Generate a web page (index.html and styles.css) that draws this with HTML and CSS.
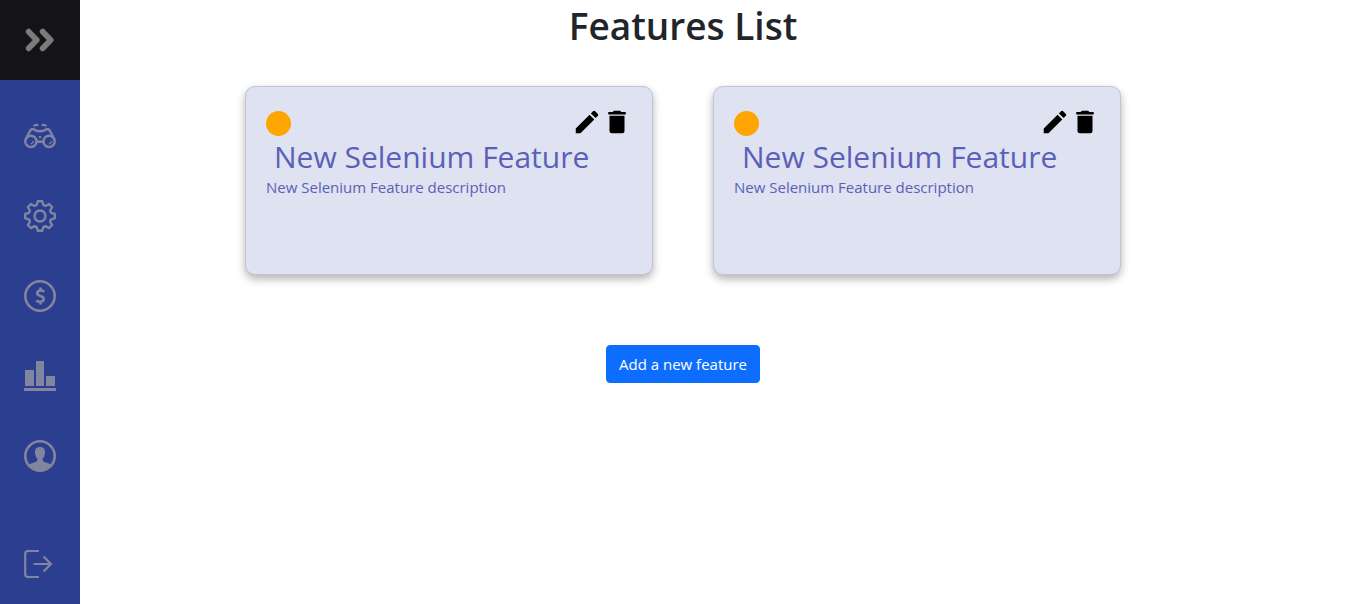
FILE: index.html
```html
<!DOCTYPE html>
<html lang="en">
<head>
  <meta charset="utf-8">
  <meta name="viewport" content="width=device-width, initial-scale=1">
  <title>Features List</title>
  <link rel="stylesheet" href="styles.css">
</head>
<body>
  <div class="layout">
    <nav class="sidebar" aria-label="Main">
      <button class="sidebar-toggle" type="button" aria-label="Expand menu">
        <svg class="nav-icon" viewBox="0 0 32 32"><path d="M4.700 7.700l8 8.300-8 8.300M18.700 7.700l8 8.300-8 8.300" fill="none" stroke="currentColor" stroke-width="5.8" stroke-linecap="round" stroke-linejoin="round"/></svg>
      </button>
      <a class="nav-link" href="#" aria-label="Explore">
        <svg class="nav-icon" viewBox="0 0 32 32" fill="none" stroke="currentColor" stroke-width="2.4">
          <circle cx="6.900" cy="21.400" r="5.600"/><circle cx="25.100" cy="21.400" r="5.600"/>
          <path d="M1.600 19.500L6 11Q7.600 8 10.200 9.600Q12 11.300 16 11.300Q20 11.300 21.800 9.600Q24.400 8 26 11L30.400 19.500M12.500 21.800h7"/>
          <path d="M9.800 6.300Q11.500 4.200 14.300 5.300M17.700 5.300Q20.500 4.200 22.200 6.300" stroke-width="2.200"/>
          <path d="M9.400 21Q9.200 23.500 6.700 23.800M27.600 21Q27.400 23.500 24.900 23.800" stroke-width="1.200"/>
          <circle cx="16" cy="17" r="1.300" fill="currentColor" stroke="none"/>
        </svg>
      </a>
      <a class="nav-link" href="#" aria-label="Settings">
        <svg class="nav-icon" viewBox="0 0 32 32" fill="none" stroke="currentColor" stroke-width="2.4" stroke-linejoin="round">
          <path d="M13.7 1.2h4.6l1 3.8 2.3 1 3.4-2 3.1 3.1-2 3.4 1 2.3 3.7 1v4.5l-3.7 1-1 2.3 2 3.4-3.1 3.1-3.4-2-2.3 1-1 3.7h-4.6l-1-3.7-2.3-1-3.4 2-3.1-3.1 2-3.4-1-2.3-3.7-1v-4.5l3.7-1 1-2.3-2-3.4L7 4l3.4 2 2.3-1z"/>
          <circle cx="16" cy="16" r="5.5"/>
        </svg>
      </a>
      <a class="nav-link" href="#" aria-label="Billing">
        <svg class="nav-icon" viewBox="0 0 32 32" fill="none" stroke="currentColor" stroke-width="2.6">
          <circle cx="16" cy="16" r="14.7"/>
          <path d="M20.4 11.7Q18.5 10.5 16.6 10.500Q13.400 10.600 13.300 13.200Q13.300 15 16.500 15.900Q19.700 17 19.700 19Q19.500 21.700 16.300 21.700Q14 21.700 12.300 20.600M16.600 7.500v3M16.600 21v3.500"/>
        </svg>
      </a>
      <a class="nav-link" href="#" aria-label="Statistics">
        <svg class="nav-icon" viewBox="0 0 32 32" fill="currentColor"><path d="M1 10h9v16H1zM12 1h8v25h-8zM22 16h9v10h-9zM0 28h32v3H0z"/></svg>
      </a>
      <a class="nav-link" href="#" aria-label="Profile">
        <svg class="nav-icon" viewBox="0 0 32 32">
          <circle cx="16" cy="16" r="14.7" fill="none" stroke="currentColor" stroke-width="2.6"/>
          <path d="M16 7c-3.6 0-5.2 2.1-5 5.8.1 2.5 1 4.400 2.300 5.800.4 2.200-.3 3-2.300 3.600-2.800.8-5 1.200-6.600 3C7 28.800 11 31 16 31s9-2.200 11.600-5.800c-1.600-1.800-3.800-2.200-6.600-3-2-.6-2.700-1.400-2.300-3.600 1.300-1.400 2.200-3.300 2.300-5.800C21.200 9.100 19.600 7 16 7z" fill="currentColor"/>
        </svg>
      </a>
      <a class="nav-link nav-logout" href="#" aria-label="Log out">
        <svg class="nav-icon" viewBox="0 0 32 32" fill="none" stroke="currentColor" stroke-width="2.2"><path d="M15 3H4Q1.200 3 1.200 6v20q0 3 2.800 3h11M9.500 16H27M19.500 8.500L27 16l-7.500 7.500"/></svg>
      </a>
    </nav>
    <main class="content">
      <h1 class="title">Features List</h1>
      <div class="cards">
        <article class="card">
          <div class="card-top">
            <span class="status"></span>
            <div class="actions">
              <button class="icon-button" type="button" aria-label="Edit"><svg class="action-icon" viewBox="0 0 24 24"><path d="M3 17.250V21h3.750L17.810 9.940l-3.750-3.750zM20.710 7.040a1 1 0 0 0 0-1.410l-2.340-2.340a1 1 0 0 0-1.410 0l-1.830 1.830 3.750 3.750z"/></svg></button>
              <button class="icon-button" type="button" aria-label="Delete"><svg class="action-icon" viewBox="0 0 24 24"><path d="M6 19a2 2 0 0 0 2 2h8a2 2 0 0 0 2-2V7H6zM19 4h-3.500l-1-1h-5l-1 1H5v2h14z"/></svg></button>
            </div>
          </div>
          <h2 class="card-title">New Selenium Feature</h2>
          <p class="card-text">New Selenium Feature description</p>
        </article>
        <article class="card">
          <div class="card-top">
            <span class="status"></span>
            <div class="actions">
              <button class="icon-button" type="button" aria-label="Edit"><svg class="action-icon" viewBox="0 0 24 24"><path d="M3 17.250V21h3.750L17.810 9.940l-3.750-3.750zM20.710 7.040a1 1 0 0 0 0-1.410l-2.340-2.340a1 1 0 0 0-1.410 0l-1.830 1.830 3.750 3.750z"/></svg></button>
              <button class="icon-button" type="button" aria-label="Delete"><svg class="action-icon" viewBox="0 0 24 24"><path d="M6 19a2 2 0 0 0 2 2h8a2 2 0 0 0 2-2V7H6zM19 4h-3.500l-1-1h-5l-1 1H5v2h14z"/></svg></button>
            </div>
          </div>
          <h2 class="card-title">New Selenium Feature</h2>
          <p class="card-text">New Selenium Feature description</p>
        </article>
      </div>
      <button class="add-button" type="button">Add a new feature</button>
    </main>
  </div>
</body>
</html>
```
FILE: styles.css
```css
* {
  box-sizing: border-box;
}

body {
  margin: 0;
  background: #fff;
  color: #212529;
  font-family: "Segoe UI", "Open Sans", "Noto Sans", sans-serif;
  font-size: 15px;
  line-height: 24px;
}

.layout {
  display: grid;
  grid-template-columns: 80px 1fr 80px;
  min-height: 100vh;
}

.sidebar {
  display: flex;
  flex-direction: column;
  background: #2c3e8f;
  color: #8285a0;
}

.sidebar-toggle,
.nav-link {
  display: flex;
  align-items: center;
  justify-content: center;
  height: 80px;
}

.sidebar-toggle {
  margin-bottom: 16px;
  padding: 0;
  border: 0;
  background: #141418;
  color: #7b7b7b;
}

.nav-link {
  color: inherit;
}

.nav-logout {
  margin-top: auto;
}

.nav-icon {
  display: block;
  width: 32px;
  height: 32px;
}

.content {
  display: flex;
  flex-direction: column;
  align-items: center;
}

.title {
  margin: 0 0 34px;
  font-size: 37px;
  font-weight: 600;
  line-height: 52px;
}

.cards {
  display: flex;
  flex-wrap: wrap;
  justify-content: center;
  gap: 60px;
  margin-bottom: 70px;
}

.card {
  width: 408px;
  min-height: 189px;
  padding: 20px;
  border: 1px solid #c1c3d4;
  border-radius: 10px;
  background: #dee2f1;
  box-shadow: 0 4px 8px rgba(0, 0, 0, 0.3);
  color: #5c5fb8;
}

.card-top {
  display: flex;
  align-items: center;
  justify-content: space-between;
  height: 32px;
}

.status {
  width: 25px;
  height: 25px;
  border-radius: 50%;
  background: orange;
}

.actions {
  display: flex;
  padding-bottom: 2px;
}

.icon-button {
  padding: 0;
  border: 0;
  background: none;
}

.action-icon {
  display: block;
  width: 30px;
  height: 30px;
}

.card-title {
  margin: 0 0 0 8px;
  font-size: 30px;
  font-weight: 400;
  line-height: 36px;
}

.card-text {
  margin: 0;
}

.add-button {
  padding: 6px 12px;
  border: 1px solid #0d6efd;
  border-radius: 4px;
  background: #0d6efd;
  color: #fff;
  font: inherit;
}
```
